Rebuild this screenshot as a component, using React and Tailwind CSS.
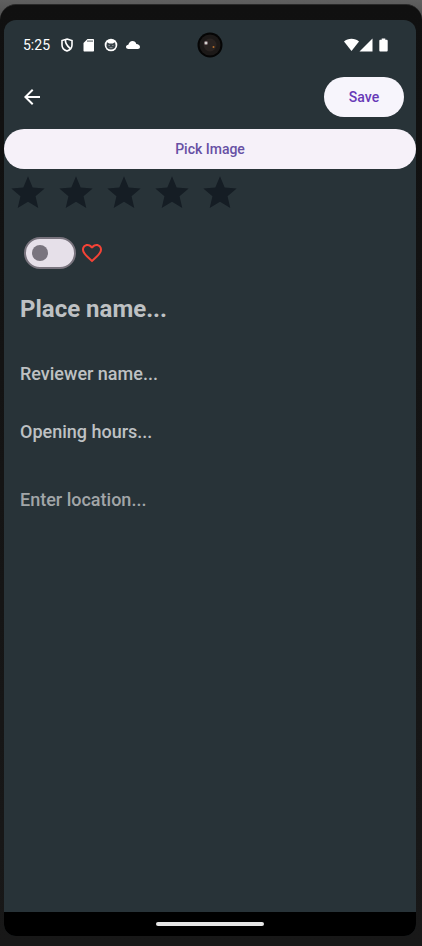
import { useState } from "react";

function ShieldIcon() {
  return (
    <svg viewBox="0 0 12 14" className="h-3.5 w-3" fill="none" stroke="white" strokeWidth="1.6">
      <path d="M6 1 11 2.6V7c0 3-2 5-5 6-3-1-5-3-5-6V2.6Z" />
      <path d="M4.500 1.500C4 5 5 7 9.300 10.500" strokeWidth="1.7" />
    </svg>
  );
}

function SdCardIcon() {
  return (
    <svg viewBox="0 0 12 14" className="h-3.5 w-3" fill="white">
      <path
        fillRule="evenodd"
        d="M4.5 1H10c.7 0 1 .4 1 1v10.500c0 .6-.4 1-1 1H1.500c-.6 0-1-.4-1-1V5ZM4.500 2.200v1.800h1v-1.800Zm2 0v1.800h1v-1.800Zm2 0v1.800h1v-1.800Z"
      />
    </svg>
  );
}

function CatIcon() {
  return (
    <svg viewBox="0 0 14 14" className="size-3.5">
      <circle cx="7" cy="7" r="6.300" fill="white" />
      <path d="M3 4.300 5.300 5.600h3.400L11 4.300l.6 3.200C11.600 10 9.500 11.500 7 11.500S2.400 10 2.400 7.500Z" fill="#3a444a" />
      <path d="M4.500 7.500h1.300M8.200 7.500h1.300M5.500 9.700h3" stroke="white" strokeOpacity=".45" />
    </svg>
  );
}

function CloudIcon() {
  return (
    <svg viewBox="0 0 14 10" className="h-2.5 w-3.5" fill="white">
      <path d="M2.500 9C1 9 0 8.200 0 7s1-2.100 2.300-2.200C3 2.500 4.500 1 6.500 1c2 0 3.400 1.200 3.800 3C12.500 4.200 14 5.300 14 7c0 1.200-.9 2-2.200 2Z" />
    </svg>
  );
}

function StatusBar() {
  return (
    <div className="grid h-[49px] grid-cols-[1fr_26px_1fr] items-center pr-5 pl-[19px]">
      <div className="flex items-center">
        <span className="w-[38px] text-sm text-white">5:25</span>
        <div className="flex items-center gap-2">
          <span className="flex w-3.5 justify-start"><ShieldIcon /></span>
          <span className="flex w-[13px] justify-start"><SdCardIcon /></span>
          <CatIcon />
          <CloudIcon />
        </div>
      </div>
      <svg viewBox="0 0 26 26" className="size-[26px]">
        <circle cx="13" cy="13" r="12.500" fill="#050505" />
        <circle cx="13" cy="13" r="10.500" fill="#1c1918" />
        <circle cx="13" cy="13" r="6.500" fill="#292321" />
        <circle cx="9" cy="11" r="2" fill="#8d7a80" />
        <circle cx="9" cy="11" r="1" fill="#e9f3e8" />
        <circle cx="16.500" cy="15" r="1" fill="#b56d2c" />
      </svg>
      <div className="flex items-center justify-end pr-2">
        <svg viewBox="0 0 15 14" className="h-3.5 w-[15px]" fill="white">
          <path d="M0 3.500C2 1.700 4.600.8 7.500.8s5.500.9 7.500 2.700L7.500 13Z" />
        </svg>
        <svg viewBox="0 0 14 14" className="size-3.5" fill="white">
          <path d="M13.500.5v13H.5Z" />
        </svg>
        <svg viewBox="0 0 9 14" className="ml-1.5 h-3.5 w-[9px]" fill="white">
          <path d="M2.700.5h3.600v1.300h1.200c.8 0 1.200.4 1.200 1.200v9.300c0 .8-.4 1.200-1.200 1.200h-6c-.8 0-1.200-.4-1.200-1.200V3c0-.8.4-1.200 1.200-1.200h1.200Z" />
        </svg>
      </div>
    </div>
  );
}

function Rating() {
  const [rating, setRating] = useState(0);
  return (
    <div role="radiogroup" aria-label="Rating" className="flex px-1">
      {[1, 2, 3, 4, 5].map((n) => (
        <label key={n} className="grid cursor-pointer pr-2">
          <input
            type="radio"
            name="rating"
            value={n}
            aria-label={`${n} stars`}
            checked={rating === n}
            onChange={() => setRating(n)}
            className="col-start-1 row-start-1 size-10 appearance-none"
          />
          <svg
            viewBox="0 0 24 24"
            className={`col-start-1 row-start-1 size-10 ${n <= rating ? "fill-amber-400" : "fill-[#151d24]"}`}
          >
            <path d="M12 17.270 18.180 21l-1.640-7.030L22 9.240l-7.190-.61L12 2 9.190 8.630 2 9.240l5.460 4.730L5.820 21z" />
          </svg>
        </label>
      ))}
    </div>
  );
}

function Field({ label, className }) {
  return (
    <input
      type="text"
      aria-label={label}
      placeholder={label}
      className={`h-12 w-full bg-transparent px-4 text-white outline-none ${className}`}
    />
  );
}

export default function App() {
  const [favorite, setFavorite] = useState(false);
  return (
    <div className="flex min-h-screen flex-col bg-[#171717] font-['Roboto','Liberation_Sans',sans-serif]">
      <div className="flex flex-1 flex-col bg-linear-to-b from-[#606060] to-[#171717] to-10% pt-1">
        <div className="flex flex-1 flex-col rounded-t-2xl border-t border-[#292929] bg-linear-to-b from-[#101010] to-[#181818] pt-[15px] pr-1.5 pb-2.5 pl-1">
          <div className="flex flex-1 flex-col overflow-hidden rounded-xl bg-[#283338]">
            <StatusBar />
            <header className="flex h-14 items-center justify-between pr-3 pl-4">
              <button type="button" aria-label="Back" className="flex size-6 items-center justify-center">
                <svg viewBox="0 0 24 24" className="size-6 fill-white">
                  <path d="M20 11H7.830l5.590-5.590L12 4l-8 8 8 8 1.410-1.410L7.830 13H20z" />
                </svg>
              </button>
              <button type="button" className="h-10 w-20 rounded-full bg-[#f7f5fc] text-sm font-medium text-[#673ab7]">
                Save
              </button>
            </header>
            <main className="flex flex-1 flex-col">
              <button type="button" className="my-1 h-10 w-full rounded-full bg-[#f6f1f9] text-sm font-medium text-[#6750a4]">
                Pick Image
              </button>
              <Rating />
              <div className="mt-6 flex items-center gap-1 pl-5">
                <input
                  id="favorite"
                  type="checkbox"
                  role="switch"
                  checked={favorite}
                  onChange={(e) => setFavorite(e.target.checked)}
                  className="h-8 w-[52px] appearance-none rounded-full border-2 border-[#79747e] bg-[#e6e0e9] px-1.5 py-1.5 before:block before:size-4 before:rounded-full before:bg-[#79747e] checked:before:ml-5"
                />
                <label htmlFor="favorite" aria-label="Favorite">
                  <svg viewBox="0 0 24 24" className="size-6 fill-[#f44336]">
                    <path d="M16.500 3c-1.740 0-3.410.81-4.500 2.090C10.910 3.810 9.240 3 7.500 3 4.420 3 2 5.420 2 8.500c0 3.780 3.400 6.860 8.550 11.540L12 21.350l1.450-1.320C18.600 15.360 22 12.280 22 8.500 22 5.420 19.580 3 16.500 3zm-4.400 15.550-.1.100-.1-.1C7.140 14.240 4 11.390 4 8.500 4 6.500 5.500 5 7.500 5c1.540 0 3.040.99 3.570 2.360h1.870C13.460 5.990 14.960 5 16.500 5c2 0 3.500 1.500 3.500 3.500 0 2.890-3.140 5.740-7.900 10.050z" />
                  </svg>
                </label>
              </div>
              <div className="flex flex-col pt-4 text-lg font-medium">
                <Field label="Place name..." className="text-2xl font-bold placeholder:text-[#bec1c3]" />
                <Field label="Reviewer name..." className="mt-4 placeholder:text-[#bec1c3]" />
                <Field label="Opening hours..." className="mt-2.5 placeholder:text-[#bec1c3]" />
                <Field label="Enter location..." className="mt-5 placeholder:text-[#a2a6a8]" />
              </div>
            </main>
            <footer className="flex h-6 items-center justify-center bg-black">
              <div className="h-1 w-[108px] rounded-full bg-[#e6e6e6]" />
            </footer>
          </div>
        </div>
      </div>
    </div>
  );
}
